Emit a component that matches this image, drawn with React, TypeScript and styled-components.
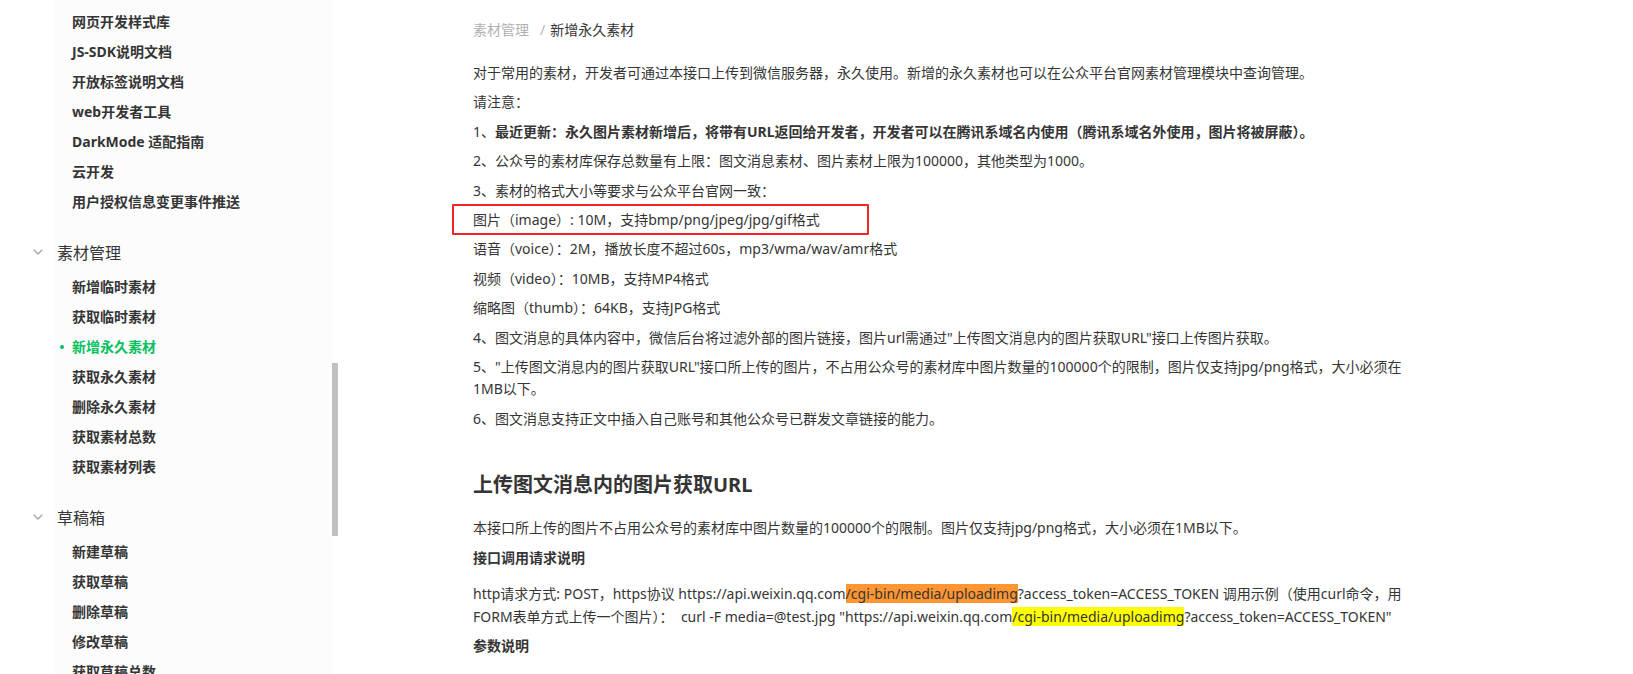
import React from 'react';
import styled, { createGlobalStyle } from 'styled-components';

const GlobalStyle = createGlobalStyle`
  html, body {
    margin: 0;
    padding: 0;
    height: 100%;
    overflow: hidden;
    background: #fff;
  }
  body {
    font-family: "Noto Sans", "Noto Sans CJK SC", sans-serif;
    color: #353535;
  }
  * { box-sizing: border-box; }
`;

const topLinks = [
  '网页开发样式库',
  'JS-SDK说明文档',
  '开放标签说明文档',
  'web开发者工具',
  'DarkMode 适配指南',
  '云开发',
  '用户授权信息变更事件推送',
];

const groups = [
  {
    title: '素材管理',
    items: ['新增临时素材', '获取临时素材', '新增永久素材', '获取永久素材', '删除永久素材', '获取素材总数', '获取素材列表'],
  },
  {
    title: '草稿箱',
    items: ['新建草稿', '获取草稿', '删除草稿', '修改草稿', '获取草稿总数'],
  },
];

const ACTIVE = '新增永久素材';

const Chevron: React.FC = () => (
  <svg width="10" height="6" viewBox="0 0 10 6" fill="none">
    <polyline points="0.8,0.8 5,5 9.2,0.8" stroke="#a3a3a3" strokeWidth="1.3" />
  </svg>
);

const App: React.FC = () => {
  return (
    <>
      <GlobalStyle />
      <Page>
        <Sidebar>
          <NavList>
            {topLinks.map((l) => (
              <NavItem key={l}>{l}</NavItem>
            ))}
          </NavList>
          {groups.map((g) => (
            <Group key={g.title}>
              <GroupHead>
                <Chevron />
                <span>{g.title}</span>
              </GroupHead>
              <NavList>
                {g.items.map((i) => (
                  <NavItem key={i} $active={i === ACTIVE}>
                    {i}
                  </NavItem>
                ))}
              </NavList>
            </Group>
          ))}
          <ScrollThumb />
        </Sidebar>

        <Main>
          <Breadcrumb>
            <Crumb>素材管理</Crumb>
            <Sep>/</Sep>
            <span>新增永久素材</span>
          </Breadcrumb>

          <P>对于常用的素材，开发者可通过本接口上传到微信服务器，永久使用。新增的永久素材也可以在公众平台官网素材管理模块中查询管理。</P>
          <P>请注意：</P>
          <P>
            1、<b>最近更新：永久图片素材新增后，将带有URL返回给开发者，开发者可以在腾讯系域名内使用（腾讯系域名外使用，图片将被屏蔽）。</b>
          </P>
          <P>2、公众号的素材库保存总数量有上限：图文消息素材、图片素材上限为100000，其他类型为1000。</P>
          <P>3、素材的格式大小等要求与公众平台官网一致：</P>
          <Boxed>图片（image）: 10M，支持bmp/png/jpeg/jpg/gif格式</Boxed>
          <P>语音（voice）：2M，播放长度不超过60s，mp3/wma/wav/amr格式</P>
          <P>视频（video）：10MB，支持MP4格式</P>
          <P>缩略图（thumb）：64KB，支持JPG格式</P>
          <P>4、图文消息的具体内容中，微信后台将过滤外部的图片链接，图片url需通过"上传图文消息内的图片获取URL"接口上传图片获取。</P>
          <P>5、"上传图文消息内的图片获取URL"接口所上传的图片，不占用公众号的素材库中图片数量的100000个的限制，图片仅支持jpg/png格式，大小必须在1MB以下。</P>
          <P>6、图文消息支持正文中插入自己账号和其他公众号已群发文章链接的能力。</P>

          <H2>上传图文消息内的图片获取URL</H2>
          <P>本接口所上传的图片不占用公众号的素材库中图片数量的100000个的限制。图片仅支持jpg/png格式，大小必须在1MB以下。</P>
          <P><b>接口调用请求说明</b></P>
          <Request>
            http请求方式: POST，https协议 https://api.weixin.qq.com<Mark $color="#ff9632">/cgi-bin/media/uploadimg</Mark>?access_token=ACCESS_TOKEN 调用示例（使用curl命令，用FORM表单方式上传一个图片）：&nbsp; curl -F media=@test.jpg "https://api.weixin.qq.com<Mark $color="#ffff00">/cgi-bin/media/uploadimg</Mark>?access_token=ACCESS_TOKEN"
          </Request>
          <P><b>参数说明</b></P>
        </Main>
      </Page>
    </>
  );
};

const Page = styled.div`
  display: flex;
  width: 100%;
  height: 674px;
  overflow: hidden;
`;

const Sidebar = styled.nav`
  position: relative;
  flex-shrink: 0;
  width: 338px;
  height: 674px;
  overflow: hidden;
  padding-top: 7px;
  background: linear-gradient(to right, #fff 55px, #fcfcfc 55px, #fcfcfc 332px, #fff 332px);
`;

const NavList = styled.ul`
  list-style: none;
  margin: 0;
  padding: 0;
`;

const NavItem = styled.li<{ $active?: boolean }>`
  position: relative;
  height: 30px;
  line-height: 30px;
  padding-left: 72px;
  font-size: 14px;
  font-weight: 700;
  white-space: nowrap;
  color: ${({ $active }) => ($active ? '#07c160' : '#353535')};

  &::before {
    content: '';
    display: ${({ $active }) => ($active ? 'block' : 'none')};
    position: absolute;
    left: 60px;
    top: 13px;
    width: 4px;
    height: 4px;
    border-radius: 50%;
    background: #07c160;
  }
`;

const Group = styled.div`
  margin-top: 15px;
`;

const GroupHead = styled.div`
  display: flex;
  align-items: center;
  gap: 14px;
  height: 40px;
  padding-left: 33px;
  font-size: 16px;
  color: #353535;
`;

const ScrollThumb = styled.div`
  position: absolute;
  left: 332px;
  top: 363px;
  width: 6px;
  height: 173px;
  background: #c1c1c1;
`;

const Main = styled.main`
  width: 1087px;
  padding: 19px 0 0 135px;
  font-size: 14px;
`;

const Breadcrumb = styled.div`
  display: flex;
  height: 22px;
  line-height: 22px;
  margin-bottom: 21px;
  font-size: 14px;
  color: #353535;
`;

const Crumb = styled.span`
  color: #b2b2b2;
`;

const Sep = styled.span`
  margin: 0 5px 0 11px;
  color: #b2b2b2;
`;

const P = styled.p`
  margin: 0 0 7px;
  line-height: 22.4px;

  b {
    font-weight: 700;
  }
`;

const Boxed = styled(P)`
  position: relative;

  &::after {
    content: '';
    position: absolute;
    left: -21px;
    top: -5px;
    width: 413px;
    height: 27px;
    border: 2px solid #f52424;
    border-radius: 1px;
  }
`;

const H2 = styled.h2`
  margin: 40px 0 17px;
  font-size: 20px;
  line-height: 30px;
  font-weight: 700;
`;

const Request = styled(P)`
  margin-top: 14px;
`;

const Mark = styled.span<{ $color: string }>`
  background: ${({ $color }) => $color};
`;

export default App;
